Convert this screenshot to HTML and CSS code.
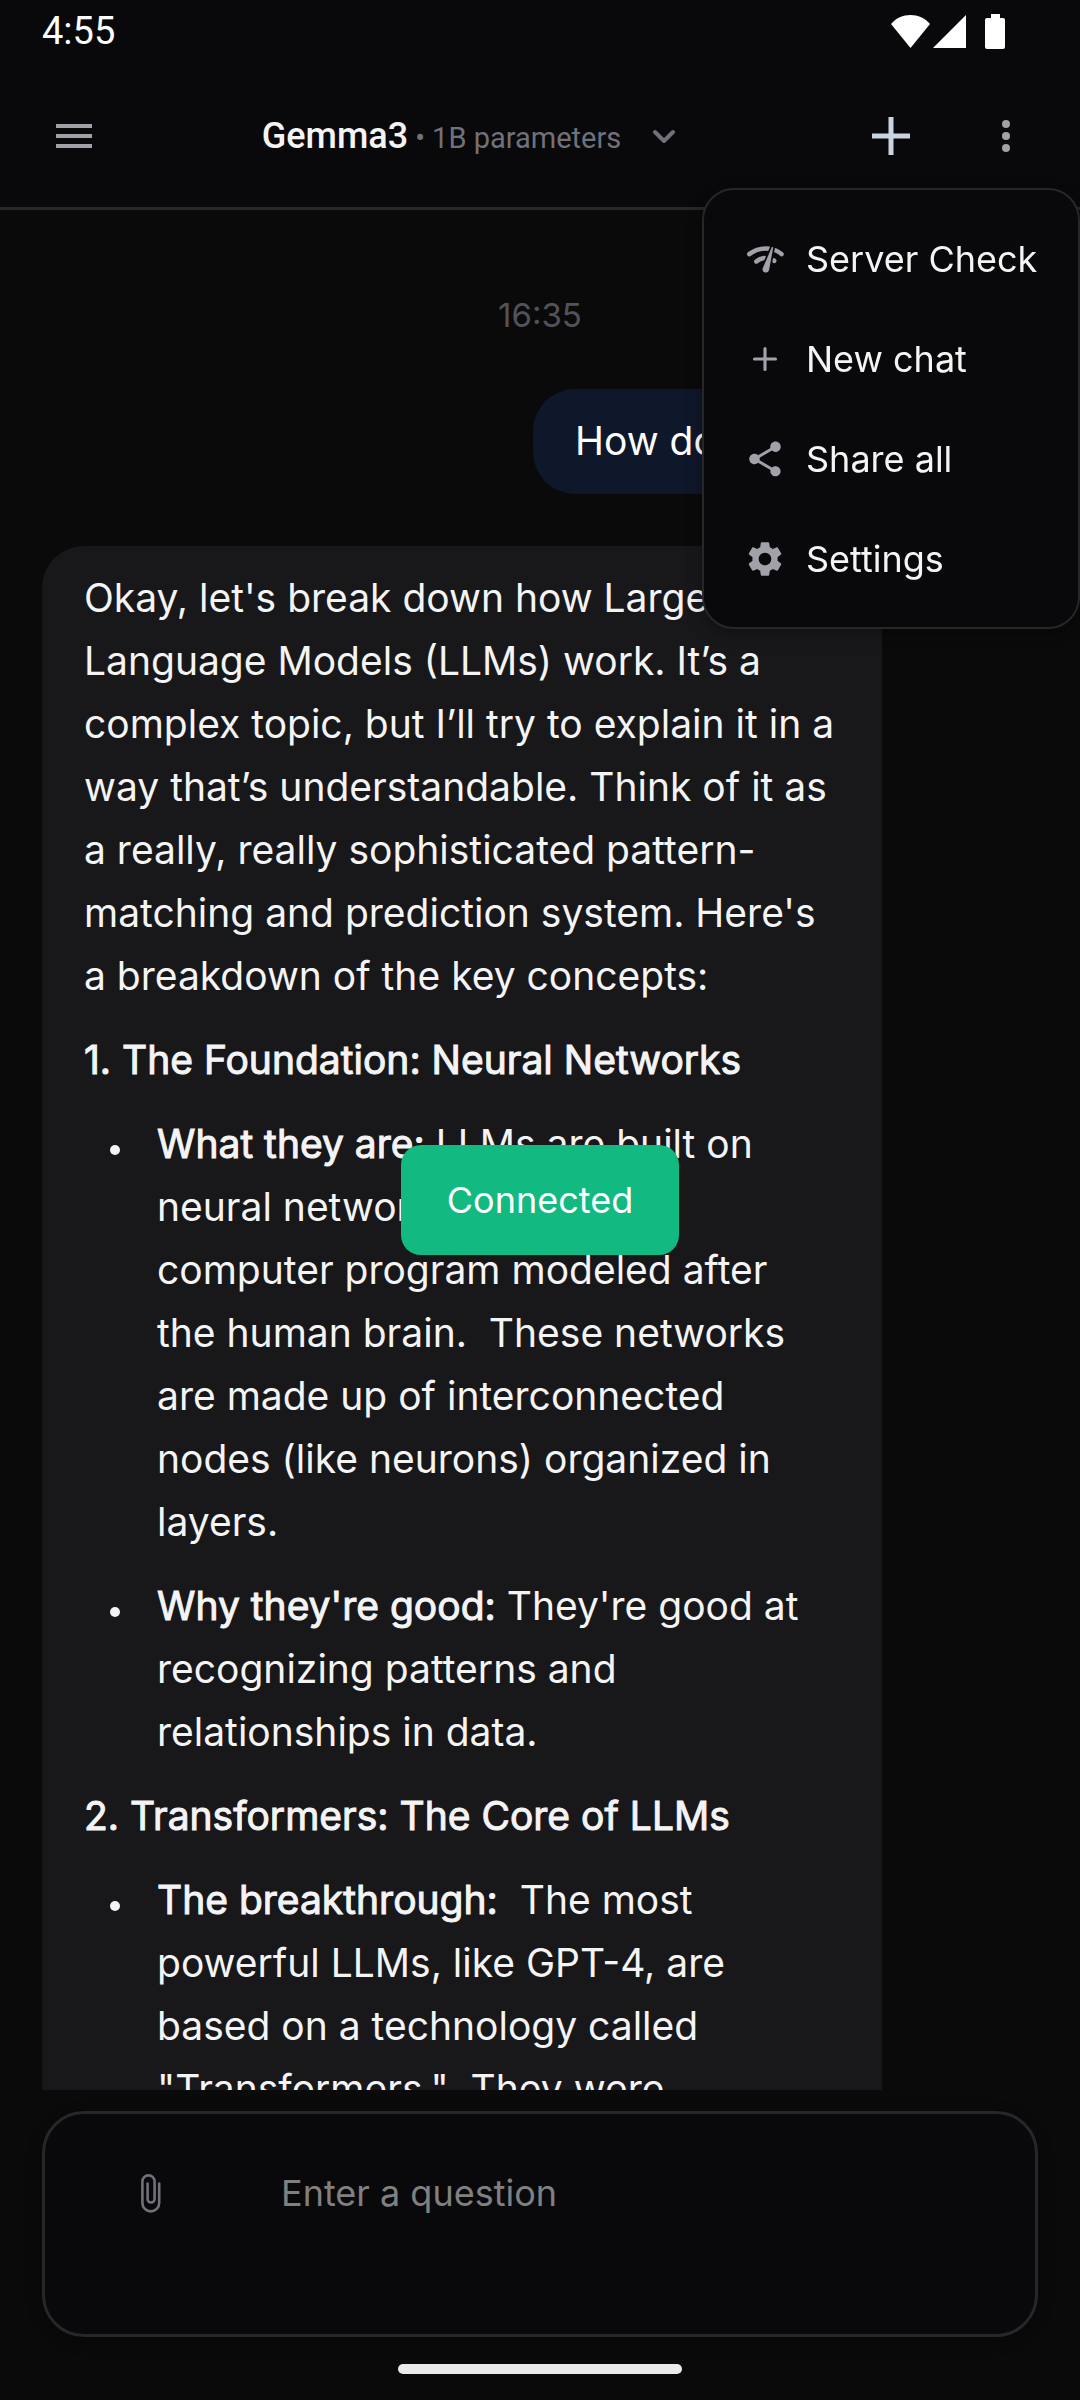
FILE: index.html
```html
<!DOCTYPE html>
<html lang="en">
<head>
<meta charset="utf-8">
<meta name="viewport" content="width=device-width, initial-scale=1">
<title>Gemma3 chat</title>
<link rel="stylesheet" href="styles.css">
</head>
<body>
<div class="app">
  <div class="status-bar">
    <span class="clock">4:55</span>
    <svg class="status-icons" viewBox="0 0 120 38" aria-hidden="true">
      <path d="M1 12C6 6 13 3 20.500 3S35 6 40 12L20.500 36Z"/>
      <path d="M76 3V36H43Z"/>
      <path d="M101 2h9v4h3q2 0 2 2v27q0 2-2 2H97q-2 0-2-2V8q0-2 2-2h4z"/>
    </svg>
  </div>

  <header class="top-bar">
    <button class="icon-button" type="button" aria-label="Open navigation">
      <svg class="icon" viewBox="0 0 24 24"><path d="M3 18h18v-2H3zm0-5h18v-2H3zm0-7v2h18V6z"/></svg>
    </button>
    <button class="model-picker" type="button">
      <span class="model-name">Gemma3</span>
      <span class="model-size">• 1B parameters</span>
      <svg class="chevron" viewBox="0 0 24 16" aria-hidden="true"><path d="M3 4l9 9 9-9"/></svg>
    </button>
    <div class="actions">
      <button class="icon-button add" type="button" aria-label="New chat">
        <svg class="icon" viewBox="0 0 48 48"><path d="M21.500 5h5v16.500H43v5H26.500V43h-5V26.500H5v-5h16.500z"/></svg>
      </button>
      <button class="icon-button" type="button" aria-label="More options" aria-expanded="true">
        <svg class="icon" viewBox="0 0 24 24"><circle cx="12" cy="6" r="2"/><circle cx="12" cy="12" r="2"/><circle cx="12" cy="18" r="2"/></svg>
      </button>
    </div>
    <nav class="menu" aria-label="Chat options">
      <button class="menu-item" type="button">
        <svg class="menu-icon" viewBox="0 0 24 24" aria-hidden="true"><path class="arc" d="M3 9.200C6.500 6.500 10.500 5.600 14.600 6.100M17.900 7Q20 7.900 21.500 9.200M7 13.400C8.500 12.100 9.900 11.600 11.600 11.400M17 12.800L17.300 13.100"/><path class="needle" d="M15.800 5.400Q16.200 4.700 16.700 5.400L14.300 18.400A1.900 1.900 0 0 1 10.600 17.600Z"/></svg>
        Server Check
      </button>
      <button class="menu-item" type="button">
        <svg class="menu-icon" viewBox="0 0 24 24" aria-hidden="true"><path class="line" d="M12 6v12M6 12h12"/></svg>
        New chat
      </button>
      <button class="menu-item" type="button">
        <svg class="menu-icon" viewBox="0 0 24 24" aria-hidden="true"><path d="M18 16.080c-.76 0-1.440.3-1.960.770L8.910 12.700c.050-.23.090-.46.090-.7s-.04-.47-.09-.7l7.050-4.110c.54.5 1.250.810 2.040.810 1.660 0 3-1.340 3-3s-1.340-3-3-3-3 1.340-3 3c0 .24.040.470.090.7L8.040 9.810C7.500 9.310 6.790 9 6 9c-1.660 0-3 1.340-3 3s1.340 3 3 3c.79 0 1.500-.31 2.040-.81l7.120 4.160c-.05.210-.08.430-.08.650 0 1.610 1.310 2.920 2.920 2.920s2.920-1.310 2.920-2.920-1.310-2.920-2.920-2.920z"/></svg>
        Share all
      </button>
      <button class="menu-item" type="button">
        <svg class="menu-icon" viewBox="0 0 24 24" aria-hidden="true"><path d="M19.140 12.940c.040-.3.060-.61.060-.94 0-.32-.02-.64-.07-.94l2.030-1.580c.18-.14.230-.41.120-.61l-1.920-3.320c-.12-.22-.37-.29-.59-.22l-2.390.960c-.5-.38-1.030-.7-1.620-.94l-.36-2.540c-.04-.24-.24-.41-.48-.41h-3.840c-.24 0-.43.170-.47.410l-.36 2.540c-.59.240-1.130.570-1.620.940l-2.390-.96c-.22-.08-.47 0-.59.220L2.740 8.870c-.12.210-.08.470.120.610l2.030 1.580c-.05.300-.09.630-.09.940s.020.640.070.940l-2.030 1.580c-.18.140-.23.410-.12.610l1.920 3.320c.12.220.370.290.590.220l2.390-.96c.5.380 1.030.7 1.620.940l.36 2.540c.05.240.240.410.480.410h3.840c.24 0 .44-.17.470-.41l.36-2.540c.59-.24 1.130-.56 1.620-.94l2.390.960c.22.080.470 0 .59-.22l1.920-3.320c.12-.22.070-.47-.12-.61zM12 15.600c-1.980 0-3.600-1.620-3.600-3.600s1.620-3.600 3.600-3.600 3.600 1.620 3.600 3.600-1.620 3.600-3.600 3.600z"/></svg>
        Settings
      </button>
    </nav>
  </header>

  <main class="chat">
    <time class="timestamp">16:35</time>
    <div class="message from-user">How does LLMs work?</div>
    <article class="message from-model">
      <p>Okay, let's break down how Large Language Models (LLMs) work. It’s a complex topic, but I’ll try to explain it in a way that’s understandable. Think of it as a really, really sophisticated pattern-matching and prediction system. Here's a breakdown of the key concepts:</p>
      <p><strong>1. The Foundation: Neural Networks</strong></p>
      <ul>
        <li><strong>What they are:</strong> LLMs are built on neural networks, a type of computer program modeled after the human brain.&nbsp; These networks are made up of interconnected nodes (like neurons) organized in layers.</li>
        <li><strong>Why they're good:</strong> They're good at recognizing patterns and relationships in data.</li>
      </ul>
      <p><strong>2. Transformers: The Core of LLMs</strong></p>
      <ul>
        <li><strong>The breakthrough:</strong>&nbsp; The most powerful LLMs, like GPT-4, are based on a technology called "Transformers."&nbsp; They were</li>
      </ul>
    </article>
  </main>

  <form class="composer">
    <button class="attach" type="button" aria-label="Attach a file">
      <svg class="clip" viewBox="0 0 20 39" aria-hidden="true"><path d="M18.200 9.500V29a8.400 8.400 0 0 1-16.800 0V7.500a6.100 6.100 0 0 1 12.200 0V25a3.500 3.500 0 0 1-7 0V9.500"/></svg>
    </button>
    <textarea class="question" rows="2" placeholder="Enter a question" aria-label="Question"></textarea>
  </form>

  <div class="home-bar"></div>
</div>

<div class="toast-layer">
  <div class="toast" role="status">Connected</div>
</div>
</body>
</html>
```
FILE: styles.css
```css
* {
  box-sizing: border-box;
}

body {
  margin: 0;
  background: #0a0a0a;
  color: #f4f4f5;
  font-family: Inter, "Noto Sans", sans-serif;
  font-weight: 400;
}

button,
textarea {
  margin: 0;
  padding: 0;
  border: 0;
  background: none;
  color: inherit;
  font: inherit;
}

svg {
  display: block;
  fill: currentColor;
}

.app {
  display: flex;
  flex-direction: column;
  height: 100vh;
  overflow: hidden;
}

/* System status bar */
.status-bar {
  display: flex;
  justify-content: space-between;
  align-items: center;
  height: 64px;
  padding: 0 70px 2px 42px;
  background: #09090b;
  color: #fff;
  font-family: Roboto, sans-serif;
}

.clock {
  font-size: 38px;
}

.status-icons {
  width: 120px;
  height: 38px;
}

/* App bar */
.top-bar {
  position: relative;
  z-index: 1;
  display: flex;
  justify-content: space-between;
  align-items: center;
  height: 146px;
  padding: 0 42px;
  border-bottom: 3px solid #27272a;
  background: #09090b;
  font-family: Roboto, sans-serif;
}

.icon-button {
  display: grid;
  place-items: center;
  width: 64px;
  height: 84px;
  color: #a1a1aa;
}

.icon {
  width: 48px;
  height: 48px;
}

.add {
  color: #cbd5e1;
}

.model-picker {
  display: flex;
  align-items: baseline;
  gap: 7px;
  padding-right: 27px;
  color: #71717a;
}

.model-name {
  color: #f4f4f5;
  font-size: 36px;
  font-weight: 500;
}

.model-size {
  font-size: 29px;
}

.chevron {
  width: 24px;
  height: 16px;
  margin-left: 24px;
  align-self: center;
  fill: none;
  stroke: currentColor;
  stroke-width: 4;
  stroke-linecap: round;
  stroke-linejoin: round;
}

.actions {
  display: flex;
  gap: 51px;
}

/* Overflow menu */
.menu {
  position: absolute;
  top: 124px;
  right: 0;
  width: 378px;
  padding: 19px 0 18px;
  border: 2px solid #27272a;
  border-radius: 32px;
  background: #09090b;
  box-shadow: 0 4px 16px rgba(0, 0, 0, .3);
  font-family: Inter, "Noto Sans", sans-serif;
}

.menu-item {
  display: flex;
  align-items: center;
  gap: 20px;
  width: 100%;
  height: 100px;
  padding: 0 40px;
  font-size: 36px;
  white-space: nowrap;
}

.menu-icon {
  flex: none;
  width: 42px;
  height: 42px;
  color: #a1a1aa;
}

.line {
  stroke: currentColor;
  stroke-width: 1.8;
  stroke-linecap: round;
}

.arc {
  fill: none;
  stroke: currentColor;
  stroke-width: 2.6;
  stroke-linecap: round;
}

.needle {
  stroke: #09090b;
  stroke-width: 2;
  paint-order: stroke;
}

/* Conversation */
.chat {
  flex: 1;
  min-height: 0;
  display: flex;
  flex-direction: column;
  overflow: hidden;
  padding: 79px 42px 0;
  font-size: 39px;
  line-height: 63px;
}

.timestamp {
  flex: none;
  align-self: center;
  height: 100px;
  color: #52525b;
  font-size: 33px;
  line-height: 52px;
}

.message {
  flex: none;
  padding: 20px 42px 22px;
  border-radius: 42px;
}

.from-user {
  align-self: flex-end;
  min-width: 505px;
  margin-bottom: 52px;
  background: #0f172a;
  color: #fff;
}

.from-model {
  width: 840px;
  max-width: 100%;
  background: #18181b;
}

.from-model p {
  margin: 0 0 21px;
}

.from-model ul {
  margin: 0;
  padding: 0 21px 0 73px;
  list-style: none;
}

.from-model li {
  margin-bottom: 21px;
}

.from-model li::before {
  content: "";
  display: inline-block;
  width: 10px;
  height: 10px;
  margin: 0 37px 0 -47px;
  border-radius: 50%;
  background: currentColor;
  vertical-align: 3px;
}

.from-model strong {
  font-weight: inherit;
  -webkit-text-stroke: 1px currentColor;
}

/* Question box */
.composer {
  display: flex;
  align-items: flex-start;
  height: 226px;
  margin: 21px 42px 27px;
  padding: 47px 40px;
  border: 3px solid #27272a;
  border-radius: 42px;
  background: #09090b;
  box-shadow: 0 4px 16px rgba(0, 0, 0, .3);
}

.attach {
  display: grid;
  place-items: center;
  width: 132px;
  height: 64px;
  color: #71717a;
}

.clip {
  width: 20px;
  height: 39px;
  fill: none;
  stroke: currentColor;
  stroke-width: 2.6;
  stroke-linecap: round;
}

.question {
  flex: 1;
  min-width: 0;
  margin-left: 64px;
  font-size: 36px;
  line-height: 64px;
  resize: none;
  outline: none;
}

.question::placeholder {
  color: #808080;
  opacity: 1;
}

.home-bar {
  align-self: center;
  width: 284px;
  height: 10px;
  margin-bottom: 26px;
  border-radius: 5px;
  background: #ebebeb;
}

/* Connection toast */
.toast-layer {
  position: fixed;
  inset: 0;
  display: grid;
  place-items: center;
  pointer-events: none;
}

.toast {
  padding: 28px 46px;
  border-radius: 20px;
  background: #12b981;
  color: #fff;
  font-size: 36px;
  line-height: 54px;
}
```
